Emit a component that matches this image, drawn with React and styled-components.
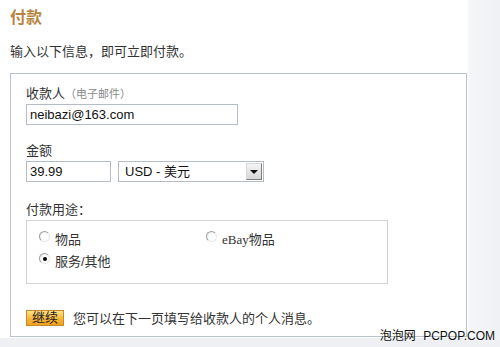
import React from "react"
import styled, { createGlobalStyle } from "styled-components"

const Global = createGlobalStyle`
  html, body {
    margin: 0;
    padding: 0;
  }
  body {
    font-family: Arial, "Liberation Sans", "Noto Sans CJK SC", sans-serif;
    color: #333;
  }
`

const Page = styled.div`
  position: relative;
  width: 500px;
  height: 347px;
  overflow: hidden;
  box-sizing: border-box;
  padding: 8px 0 0 10px;
  background:
    linear-gradient(to bottom, transparent 338px, #eef0f3 338px),
    linear-gradient(to right, #fff 0, #fff 466px, #f4f5f7 470px, #eff1f4 100%);
`

const Title = styled.h1`
  margin: 0;
  font-size: 16px;
  line-height: 20px;
  font-weight: bold;
  color: #b8843f;
`

const Intro = styled.p`
  margin: 16px 0 0;
  font-size: 13px;
  line-height: 16px;
  color: #333;
`

const Panel = styled.div`
  box-sizing: border-box;
  width: 457px;
  height: 264px;
  margin-top: 13px;
  padding: 12px 15px 0;
  border: 1px solid #b9c3ce;
  background: #fff;
  display: flex;
  flex-direction: column;
`

const Field = styled.div`
  display: flex;
  flex-direction: column;
  gap: 2px;
  margin-top: ${p => p.$top || 0}px;
`

const Label = styled.label`
  font-size: 13px;
  line-height: 16px;
  color: #333;
`

const Hint = styled.span`
  font-size: 11px;
  color: #8a8a8a;
`

const TextBox = styled.div`
  box-sizing: border-box;
  width: ${p => p.$w}px;
  height: 21px;
  padding: 0 3px;
  border: 1px solid #b4bcc6;
  font-size: 13px;
  line-height: 19px;
  color: #111;
`

const Row = styled.div`
  display: flex;
  gap: 7px;
`

const SelectBox = styled.div`
  box-sizing: border-box;
  width: 146px;
  height: 21px;
  border: 1px solid #b4bcc6;
  display: flex;
  align-items: stretch;
  padding: 1px;
`

const SelectValue = styled.div`
  flex: 1;
  padding-left: 5px;
  font-size: 13px;
  line-height: 17px;
  color: #111;
`

const DropBtn = styled.div`
  box-sizing: border-box;
  width: 16px;
  border: 1px solid #7d7d7d;
  border-top-color: #d8d8d8;
  border-left-color: #d8d8d8;
  background: linear-gradient(#f4f4f4, #d6d6d6);
  display: flex;
  align-items: center;
  justify-content: center;
`

const Arrow = styled.span`
  width: 0;
  height: 0;
  border-left: 4px solid transparent;
  border-right: 4px solid transparent;
  border-top: 4px solid #111;
`

const RadioGroup = styled.div`
  box-sizing: border-box;
  width: 362px;
  height: 64px;
  border: 1px solid #cfd3d8;
  padding: 6px 0 0 12px;
  display: grid;
  grid-template-columns: 167px 1fr;
  grid-auto-rows: 22px;
  align-items: center;
`

const Option = styled.div`
  display: flex;
  align-items: center;
  gap: 5px;
  font-size: 13px;
  color: #333;
  font-family: ${p => (p.$serif ? '"Liberation Serif", "Noto Sans CJK SC", serif' : "inherit")};
`

const Radio = styled.span`
  box-sizing: border-box;
  width: 11px;
  height: 11px;
  border-radius: 50%;
  border: 1px solid #a0a0a0;
  border-bottom-color: #e8e8e8;
  border-right-color: #e8e8e8;
  background: radial-gradient(circle at 60% 60%, #fff 40%, #e4e4e4 100%);
  display: flex;
  align-items: center;
  justify-content: center;
  margin-top: -3px;

  &::after {
    content: "";
    width: 4px;
    height: 4px;
    border-radius: 50%;
    background: ${p => (p.$checked ? "#000" : "transparent")};
  }
`

const Footer = styled.div`
  display: flex;
  align-items: center;
  gap: 9px;
  margin-top: 24px;
`

const Button = styled.button`
  box-sizing: border-box;
  width: 38px;
  height: 16px;
  padding: 0;
  border: 1px solid #c8892b;
  background: linear-gradient(#ffe38a, #f7b53a 55%, #f0a020);
  font-family: inherit;
  font-size: 13px;
  line-height: 14px;
  color: #222;
`

const Note = styled.span`
  font-size: 13px;
  color: #333;
`

const Watermark = styled.div`
  position: absolute;
  right: 5px;
  bottom: 4px;
  font-family: "Liberation Sans", "Noto Sans CJK SC", sans-serif;
  font-size: 12px;
  line-height: 14px;
  color: #111;
  word-spacing: 4px;
`

export default function App() {
  return (
    <Page>
      <Global />
      <Title>付款</Title>
      <Intro>输入以下信息，即可立即付款。</Intro>
      <Panel>
        <Field>
          <Label>
            收款人<Hint>（电子邮件）</Hint>
          </Label>
          <TextBox $w={212}>neibazi@163.com</TextBox>
        </Field>
        <Field $top={18}>
          <Label>金额</Label>
          <Row>
            <TextBox $w={85}>39.99</TextBox>
            <SelectBox>
              <SelectValue>USD - 美元</SelectValue>
              <DropBtn>
                <Arrow />
              </DropBtn>
            </SelectBox>
          </Row>
        </Field>
        <Field $top={20}>
          <Label>付款用途：</Label>
          <RadioGroup>
            <Option>
              <Radio />
              物品
            </Option>
            <Option $serif>
              <Radio />
              eBay物品
            </Option>
            <Option>
              <Radio $checked />
              服务/其他
            </Option>
          </RadioGroup>
        </Field>
        <Footer>
          <Button>继续</Button>
          <Note>您可以在下一页填写给收款人的个人消息。</Note>
        </Footer>
      </Panel>
      <Watermark>泡泡网 PCPOP.COM</Watermark>
    </Page>
  )
}
